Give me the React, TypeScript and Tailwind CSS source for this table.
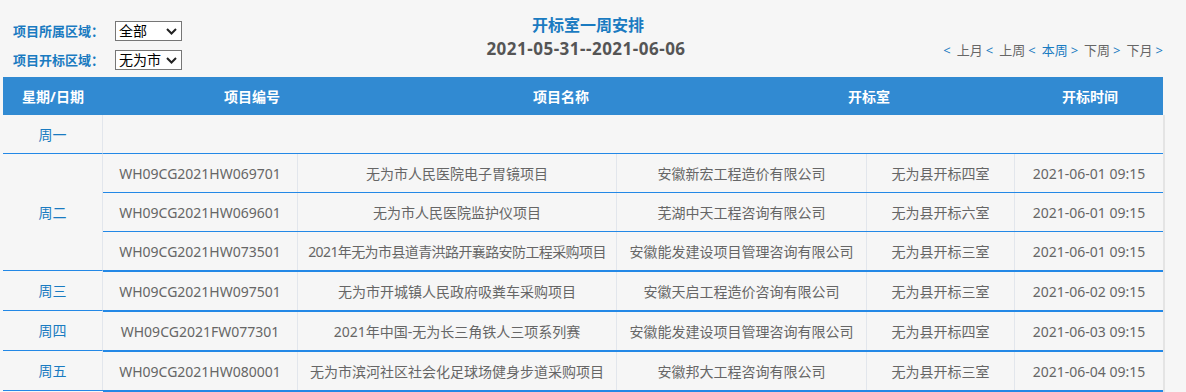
import React from "react";

type Row = { code: string; name: string; agent: string; room: string; time: string; tight?: boolean };

const groups: { day: string; thick: boolean; rows: Row[] }[] = [
  {
    day: "周二",
    thick: false,
    rows: [
      { code: "WH09CG2021HW069701", name: "无为市人民医院电子胃镜项目", agent: "安徽新宏工程造价有限公司", room: "无为县开标四室", time: "2021-06-01 09:15" },
      { code: "WH09CG2021HW069601", name: "无为市人民医院监护仪项目", agent: "芜湖中天工程咨询有限公司", room: "无为县开标六室", time: "2021-06-01 09:15" },
      { code: "WH09CG2021HW073501", name: "2021年无为市县道青洪路开襄路安防工程采购项目", agent: "安徽能发建设项目管理咨询有限公司", room: "无为县开标三室", time: "2021-06-01 09:15", tight: true },
    ],
  },
  {
    day: "周三",
    thick: true,
    rows: [
      { code: "WH09CG2021HW097501", name: "无为市开城镇人民政府吸粪车采购项目", agent: "安徽天启工程造价咨询有限公司", room: "无为县开标三室", time: "2021-06-02 09:15" },
    ],
  },
  {
    day: "周四",
    thick: true,
    rows: [
      { code: "WH09CG2021FW077301", name: "2021年中国-无为长三角铁人三项系列赛", agent: "安徽能发建设项目管理咨询有限公司", room: "无为县开标四室", time: "2021-06-03 09:15" },
    ],
  },
  {
    day: "周五",
    thick: true,
    rows: [
      { code: "WH09CG2021HW080001", name: "无为市滨河社区社会化足球场健身步道采购项目", agent: "安徽邦大工程咨询有限公司", room: "无为县开标三室", time: "2021-06-04 09:15" },
    ],
  },
];

function Chevron() {
  return (
    <svg width="11" height="7" viewBox="0 0 11 7" className="shrink-0">
      <polyline points="1,1 5.5,5.5 10,1" fill="none" stroke="#222" strokeWidth="2" />
    </svg>
  );
}

function FilterRow({ label, value }: { label: string; value: string }) {
  return (
    <div className="flex items-center h-[20px]">
      <div className="w-[102px] text-[13px] font-bold text-[#1a7bc1] leading-[20px] whitespace-nowrap">{label}</div>
      <div className="w-[67px] h-[20px] border border-[#767676] bg-white flex items-center justify-between pl-[3px] pr-[4px]">
        <span className="text-[14px] text-black leading-[18px]">{value}</span>
        <Chevron />
      </div>
    </div>
  );
}

function Cell({ w, children, last, tight }: { w: string; children: React.ReactNode; last?: boolean; tight?: boolean }) {
  return (
    <div
      className={`${w} shrink-0 flex items-center justify-center whitespace-nowrap text-[14px] text-[#666] ${last ? "" : "border-r border-[#e2e6ec]"} ${tight ? "tracking-[-0.6px]" : ""}`}
    >
      {children}
    </div>
  );
}

function Br({ c }: { c: string }) {
  return <span className="text-[#1a7bc1] mr-[6px]">{c}</span>;
}

export default function App() {
  return (
    <div
      className="w-[1186px] h-[392px] bg-[#f6f6f6] overflow-hidden"
      style={{ fontFamily: '"Noto Sans", "Noto Sans CJK SC", sans-serif' }}
    >
      {/* Top bar */}
      <div className="ml-[3px] w-[1160px] h-[77px] flex">
        <div className="w-[260px] pl-[10px] pt-[21px] flex flex-col gap-[9px]">
          <FilterRow label="项目所属区域：" value="全部" />
          <FilterRow label="项目开标区域：" value="无为市" />
        </div>
        <div className="flex-1 flex flex-col items-center pt-[14px]">
          <div className="text-[16px] font-bold text-[#1a7bc1] leading-[22px] pl-[10px]">开标室一周安排</div>
          <div className="text-[17px] font-bold text-[#555] leading-[26px] tracking-[0.5px] pl-[6px]">2021-05-31--2021-06-06</div>
        </div>
        <div className="w-[260px] flex justify-end items-start pt-[40px] text-[13px] leading-[20px] whitespace-nowrap">
          <Br c="<" />
          <span className="text-[#666] mr-[3px]">上月</span>
          <Br c="<" />
          <span className="text-[#666] mr-[3px]">上周</span>
          <Br c="<" />
          <span className="text-[#1a7bc1] mr-[3px]">本周</span>
          <Br c=">" />
          <span className="text-[#666] mr-[3px]">下周</span>
          <Br c=">" />
          <span className="text-[#666] mr-[3px]">下月</span>
          <span className="text-[#1a7bc1]">&gt;</span>
        </div>
      </div>

      {/* Table */}
      <div className="ml-[3px] w-[1162px]">
        <div className="w-[1160px] h-[38px] bg-[#318ad2] flex text-white text-[14px] font-bold">
          <div className="w-[100px] flex items-center justify-center">星期/日期</div>
          <div className="w-[298px] flex items-center justify-center">项目编号</div>
          <div className="w-[320px] flex items-center justify-center">项目名称</div>
          <div className="w-[296px] flex items-center justify-center">开标室</div>
          <div className="w-[146px] flex items-center justify-center">开标时间</div>
        </div>
        <div className="border-r-2 border-[#e4e4e4] w-[1162px]">
          {/* Monday */}
          <div className="flex h-[38px]">
            <div className="w-[100px] flex items-center justify-center text-[14px] text-[#1a7bc1] border-r border-[#e2e6ec]">周一</div>
            <div className="flex-1" />
          </div>
          {groups.map((g) => (
            <div key={g.day} className="flex">
              <div className="w-[100px] shrink-0 border-t border-[#2388e6] border-r border-r-[#e2e6ec] flex items-center justify-center text-[14px] text-[#1a7bc1]">
                {g.day}
              </div>
              <div className="flex-1 flex flex-col">
                {g.rows.map((r) => (
                  <div
                    key={r.code}
                    className={`flex ${g.thick ? "h-[40px] border-t-2" : "h-[39px] border-t"} border-[#2388e6]`}
                  >
                    <Cell w="w-[195px]">{r.code}</Cell>
                    <Cell w="w-[319px]" tight={r.tight}>{r.name}</Cell>
                    <Cell w="w-[250px]">{r.agent}</Cell>
                    <Cell w="w-[148px]">{r.room}</Cell>
                    <Cell w="w-[148px]" last>{r.time}</Cell>
                  </div>
                ))}
              </div>
            </div>
          ))}
          <div className="flex">
            <div className="w-[100px] border-t border-[#2388e6]" />
            <div className="flex-1 border-t-2 border-[#2388e6]" />
          </div>
        </div>
      </div>
    </div>
  );
}
